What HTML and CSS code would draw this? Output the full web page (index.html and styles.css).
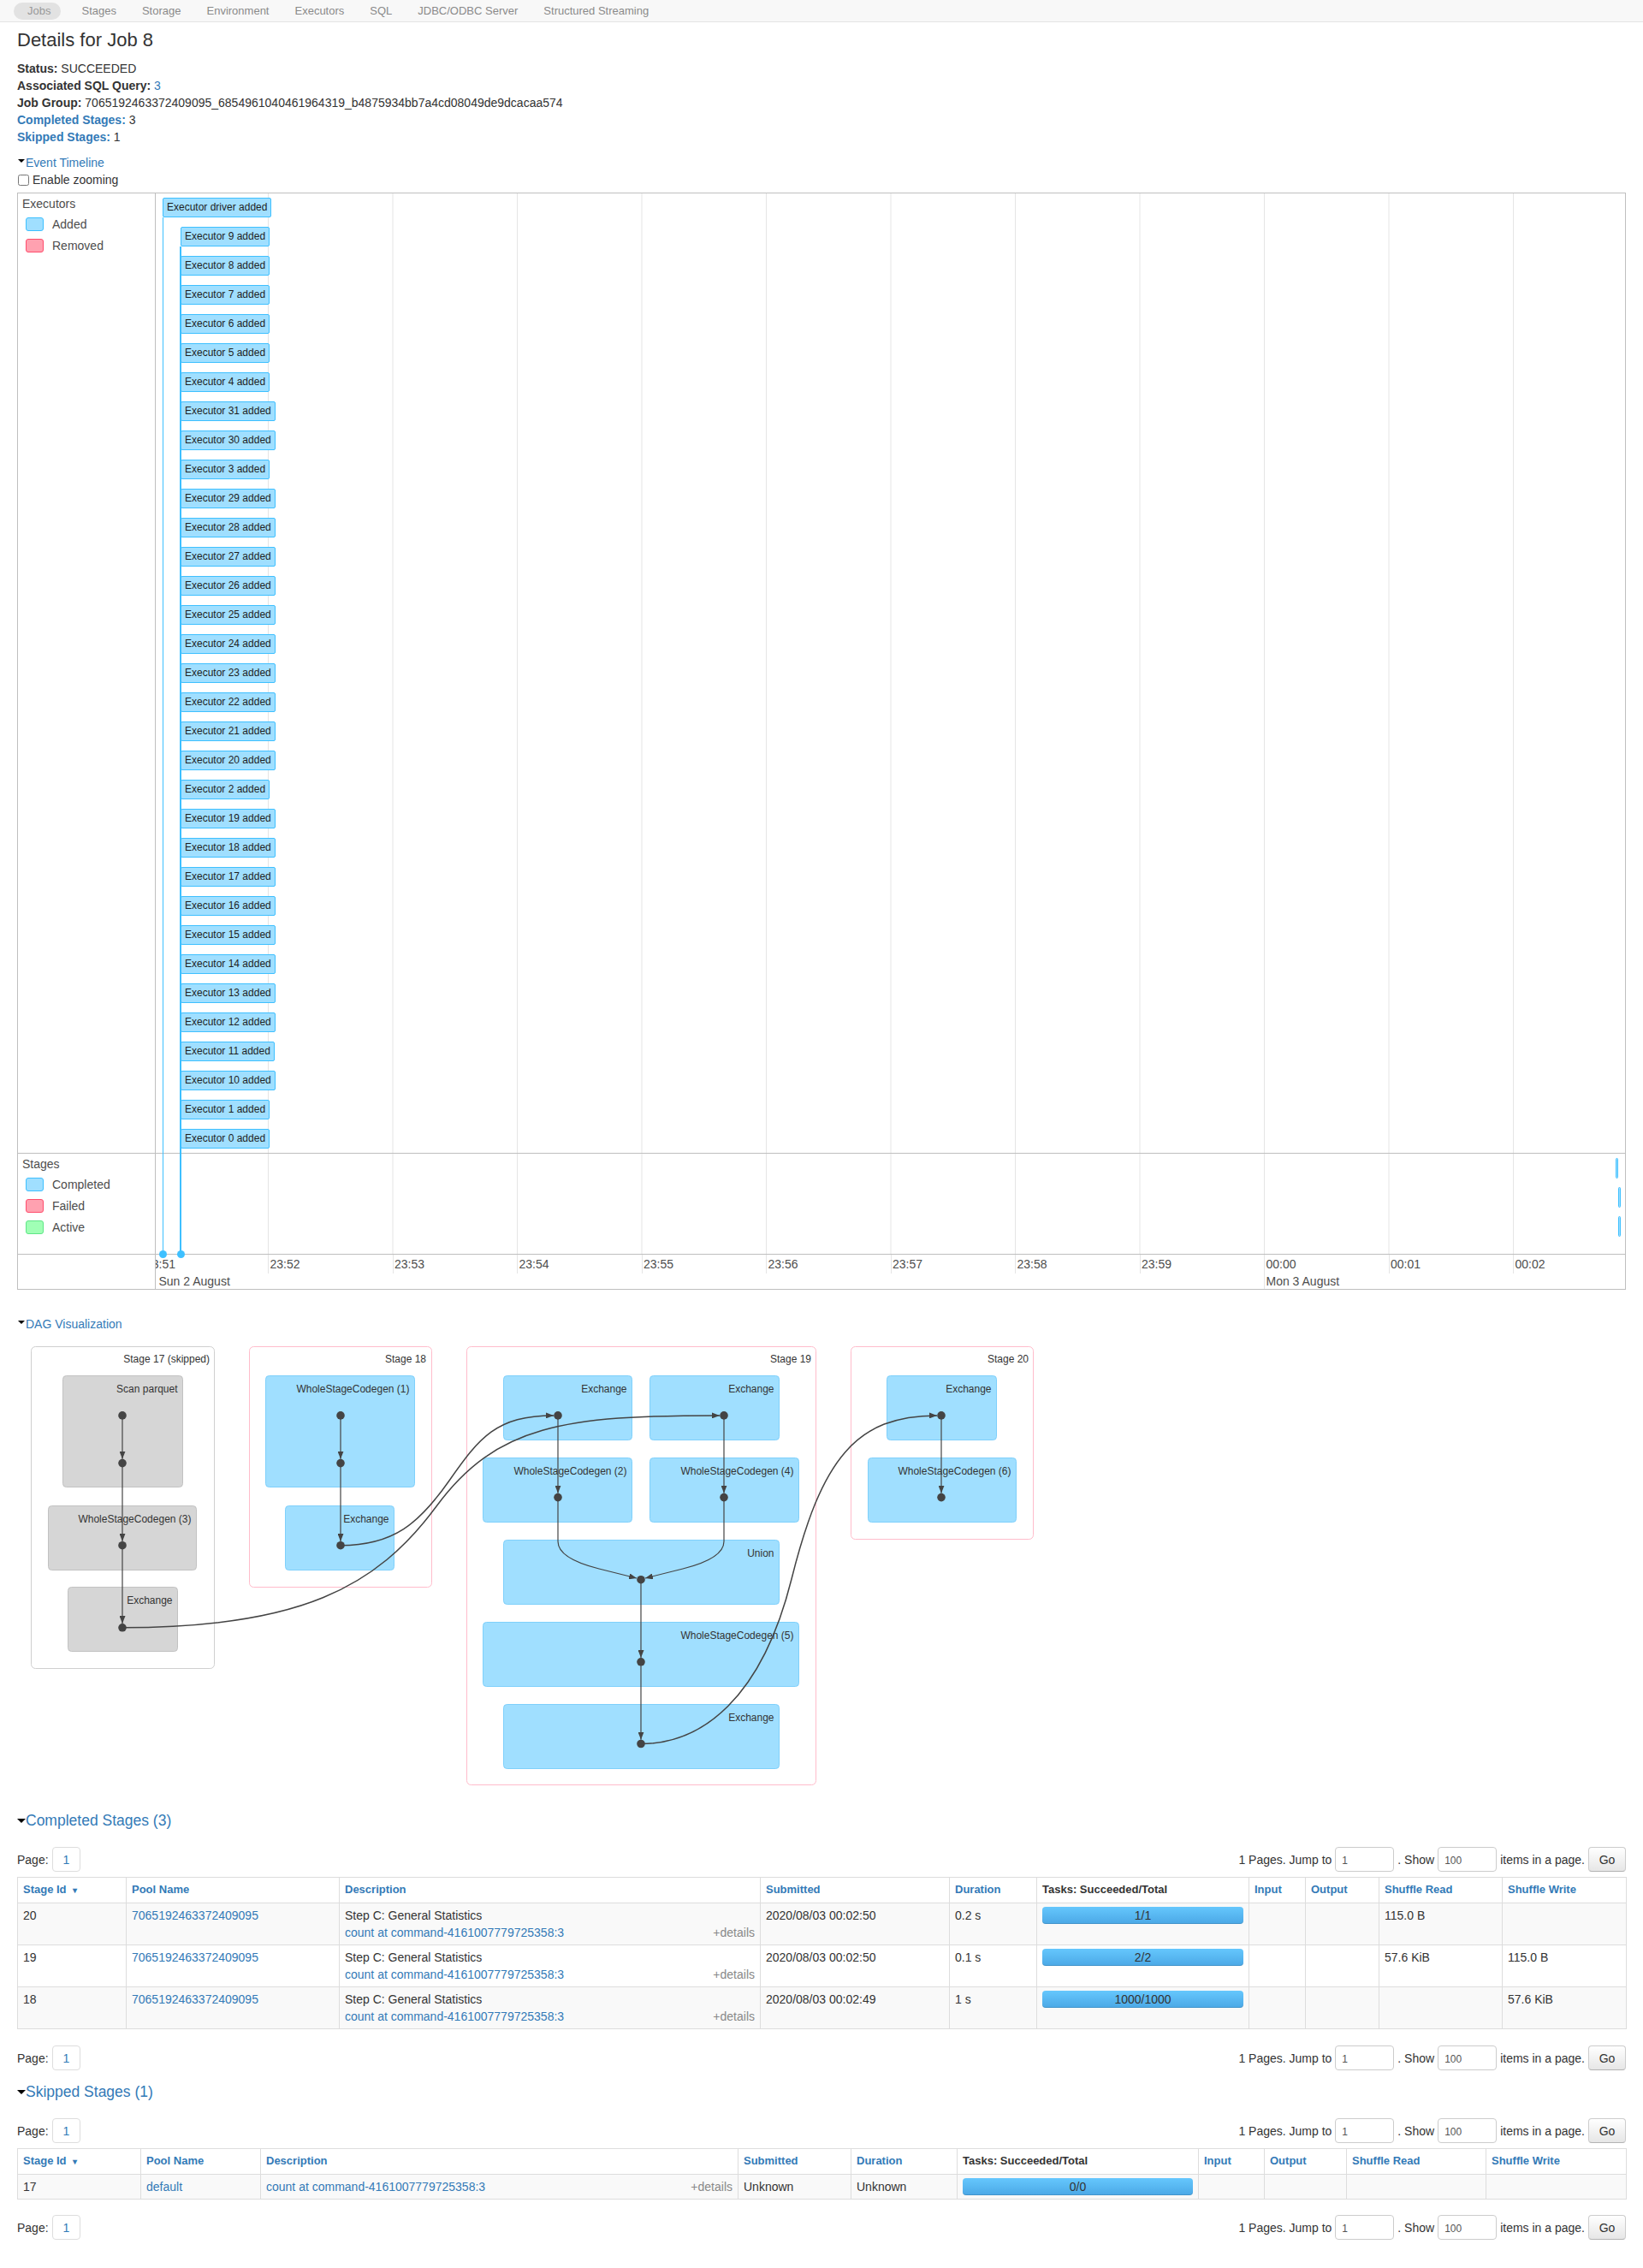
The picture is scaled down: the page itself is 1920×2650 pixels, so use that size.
FILE: index.html
```html
<!DOCTYPE html>
<html lang="en">
<head>
<meta charset="utf-8">
<title>Spark Jobs - Details for Job 8</title>
<link rel="stylesheet" href="styles.css">
</head>
<body>
<div class="nav">
  <span class="nav-item active">Jobs</span>
  <span class="nav-item">Stages</span>
  <span class="nav-item">Storage</span>
  <span class="nav-item">Environment</span>
  <span class="nav-item">Executors</span>
  <span class="nav-item">SQL</span>
  <span class="nav-item">JDBC/ODBC Server</span>
  <span class="nav-item">Structured Streaming</span>
</div>

<div class="container">
  <h3 class="title">Details for Job 8</h3>
  <ul class="details">
    <li><strong>Status:</strong> SUCCEEDED</li>
    <li><strong>Associated SQL Query:</strong> <a href="#">3</a></li>
    <li><strong>Job Group:</strong> 7065192463372409095_6854961040461964319_b4875934bb7a4cd08049de9dcacaa574</li>
    <li><a class="strong" href="#">Completed Stages:</a> 3</li>
    <li><a class="strong" href="#">Skipped Stages:</a> 1</li>
  </ul>

  <div class="toggle small"><span class="arrow sm"></span><a href="#">Event Timeline</a></div>
  <label class="zoom"><input type="checkbox"><span>Enable zooming</span></label>

  <div class="tl">
    <div class="tl-label">
      <div class="grp-title">Executors</div>
      <div class="legend">
        <div class="lg-row"><span class="lg-box blue"></span>Added</div>
        <div class="lg-row"><span class="lg-box red"></span>Removed</div>
      </div>
    </div>
    <div class="tl-content exec">
      <div class="ex drv">Executor driver added</div>
      <div class="ex">Executor 9 added</div>
      <div class="ex">Executor 8 added</div>
      <div class="ex">Executor 7 added</div>
      <div class="ex">Executor 6 added</div>
      <div class="ex">Executor 5 added</div>
      <div class="ex">Executor 4 added</div>
      <div class="ex">Executor 31 added</div>
      <div class="ex">Executor 30 added</div>
      <div class="ex">Executor 3 added</div>
      <div class="ex">Executor 29 added</div>
      <div class="ex">Executor 28 added</div>
      <div class="ex">Executor 27 added</div>
      <div class="ex">Executor 26 added</div>
      <div class="ex">Executor 25 added</div>
      <div class="ex">Executor 24 added</div>
      <div class="ex">Executor 23 added</div>
      <div class="ex">Executor 22 added</div>
      <div class="ex">Executor 21 added</div>
      <div class="ex">Executor 20 added</div>
      <div class="ex">Executor 2 added</div>
      <div class="ex">Executor 19 added</div>
      <div class="ex">Executor 18 added</div>
      <div class="ex">Executor 17 added</div>
      <div class="ex">Executor 16 added</div>
      <div class="ex">Executor 15 added</div>
      <div class="ex">Executor 14 added</div>
      <div class="ex">Executor 13 added</div>
      <div class="ex">Executor 12 added</div>
      <div class="ex">Executor 11 added</div>
      <div class="ex">Executor 10 added</div>
      <div class="ex">Executor 1 added</div>
      <div class="ex">Executor 0 added</div>
    </div>

    <div class="tl-label">
      <div class="grp-title">Stages</div>
      <div class="legend">
        <div class="lg-row"><span class="lg-box blue"></span>Completed</div>
        <div class="lg-row"><span class="lg-box red"></span>Failed</div>
        <div class="lg-row"><span class="lg-box green"></span>Active</div>
      </div>
    </div>
    <div class="tl-content stg">
      <div class="sbar first"></div>
      <div class="sbar"></div>
      <div class="sbar"></div>
    </div>

    <div class="tl-label last"></div>
    <div class="tl-axis">
      <div class="minor">
        <span class="tick">23:51</span>
        <span class="tick">23:52</span>
        <span class="tick">23:53</span>
        <span class="tick">23:54</span>
        <span class="tick">23:55</span>
        <span class="tick">23:56</span>
        <span class="tick">23:57</span>
        <span class="tick">23:58</span>
        <span class="tick">23:59</span>
        <span class="tick">00:00</span>
        <span class="tick">00:01</span>
        <span class="tick">00:02</span>
      </div>
      <div class="major">
        <span class="day d1">Sun 2 August</span>
        <span class="day d2">Mon 3 August</span>
      </div>
    </div>

    <div class="tl-overlay">
      <span class="vline drv-line"></span>
      <span class="vline ex-line"></span>
      <span class="dot drv-dot"></span>
      <span class="dot ex-dot"></span>
    </div>
  </div>

  <div class="toggle dagh"><span class="arrow sm"></span><a href="#">DAG Visualization</a></div>

  <svg class="dag" width="1880" height="525" viewBox="0 0 1880 525" xmlns="http://www.w3.org/2000/svg">
    <defs>
      <marker id="ah" viewBox="0 0 9 7" refX="9" refY="3.5" markerWidth="9" markerHeight="7" markerUnits="userSpaceOnUse" orient="auto">
        <path d="M0,0 L9,3.5 L0,7 z" fill="#444"/>
      </marker>
    </defs>

    <!-- Stage 17 -->
    <rect class="cl-stage skipped" x="16.5" y="8.5" width="214" height="376" rx="5"/>
    <text class="lbl" x="225" y="27">Stage 17 (skipped)</text>
    <rect class="nd skip" x="53.5" y="42.5" width="140" height="130" rx="4"/>
    <text class="lbl" x="187.5" y="61.5">Scan parquet</text>
    <rect class="nd skip" x="36.5" y="194.5" width="173" height="75" rx="4"/>
    <text class="lbl" x="203.5" y="213.5">WholeStageCodegen (3)</text>
    <rect class="nd skip" x="59.5" y="289.5" width="128" height="75" rx="4"/>
    <text class="lbl" x="181.5" y="308.5">Exchange</text>

    <!-- Stage 18 -->
    <rect class="cl-stage" x="271.5" y="8.5" width="213" height="281" rx="5"/>
    <text class="lbl" x="478" y="27">Stage 18</text>
    <rect class="nd" x="290.5" y="42.5" width="174" height="130" rx="4"/>
    <text class="lbl" x="458.5" y="61.5">WholeStageCodegen (1)</text>
    <rect class="nd" x="313.5" y="194.5" width="127" height="75" rx="4"/>
    <text class="lbl" x="434.5" y="213.5">Exchange</text>

    <!-- Stage 19 -->
    <rect class="cl-stage" x="525.5" y="8.5" width="408" height="512" rx="5"/>
    <text class="lbl" x="928" y="27">Stage 19</text>
    <rect class="nd" x="568.5" y="42.5" width="150" height="75" rx="4"/>
    <text class="lbl" x="712.5" y="61.5">Exchange</text>
    <rect class="nd" x="739.5" y="42.5" width="151" height="75" rx="4"/>
    <text class="lbl" x="884.5" y="61.5">Exchange</text>
    <rect class="nd" x="544.5" y="138.5" width="174" height="75" rx="4"/>
    <text class="lbl" x="712.5" y="157.5">WholeStageCodegen (2)</text>
    <rect class="nd" x="739.5" y="138.5" width="174" height="75" rx="4"/>
    <text class="lbl" x="907.5" y="157.5">WholeStageCodegen (4)</text>
    <rect class="nd" x="568.5" y="234.5" width="322" height="75" rx="4"/>
    <text class="lbl" x="884.5" y="253.5">Union</text>
    <rect class="nd" x="544.5" y="330.5" width="369" height="75" rx="4"/>
    <text class="lbl" x="907.5" y="349.5">WholeStageCodegen (5)</text>
    <rect class="nd" x="568.5" y="426.5" width="322" height="75" rx="4"/>
    <text class="lbl" x="884.5" y="445.5">Exchange</text>

    <!-- Stage 20 -->
    <rect class="cl-stage" x="974.5" y="8.5" width="213" height="225" rx="5"/>
    <text class="lbl" x="1182" y="27">Stage 20</text>
    <rect class="nd" x="1016.5" y="42.5" width="128" height="75" rx="4"/>
    <text class="lbl" x="1138.5" y="61.5">Exchange</text>
    <rect class="nd" x="994.5" y="138.5" width="173" height="75" rx="4"/>
    <text class="lbl" x="1161.5" y="157.5">WholeStageCodegen (6)</text>

    <!-- intra-stage edges -->
    <path class="ed" d="M123,88.9 V139.8" marker-end="url(#ah)"/>
    <path class="ed" d="M123,144.6 V235.9" marker-end="url(#ah)"/>
    <path class="ed" d="M123,240.7 V332" marker-end="url(#ah)"/>
    <path class="ed" d="M378,88.9 V139.8" marker-end="url(#ah)"/>
    <path class="ed" d="M378,144.6 V235.9" marker-end="url(#ah)"/>
    <path class="ed" d="M632,88.9 V179.8" marker-end="url(#ah)"/>
    <path class="ed" d="M826,88.9 V179.8" marker-end="url(#ah)"/>
    <path class="ed" d="M632,184.6 V236 Q632,256 680,268 L724,279" marker-end="url(#ah)"/>
    <path class="ed" d="M826,184.6 V236 Q826,256 778,268 L734,279" marker-end="url(#ah)"/>
    <path class="ed" d="M729,280.7 V372" marker-end="url(#ah)"/>
    <path class="ed" d="M729,376.8 V467.7" marker-end="url(#ah)"/>
    <path class="ed" d="M1080,88.9 V179.8" marker-end="url(#ah)"/>

    <!-- cross-stage edges -->
    <path class="ed x" d="M123,336.8 C330,336.8 420,290 490,195 S640,88.9 821,88.9" marker-end="url(#ah)"/>
    <path class="ed x" d="M378,240.7 C440,240.7 470,215 505,165 S560,88.9 627,88.9" marker-end="url(#ah)"/>
    <path class="ed x" d="M729,472.5 C800,472.5 870,420 905,280 S980,88.9 1075,88.9" marker-end="url(#ah)"/>

    <!-- dots -->
    <circle class="dt" cx="123" cy="88.9" r="4.8"/>
    <circle class="dt" cx="123" cy="144.6" r="4.8"/>
    <circle class="dt" cx="123" cy="240.7" r="4.8"/>
    <circle class="dt" cx="123" cy="336.8" r="4.8"/>
    <circle class="dt" cx="378" cy="88.9" r="4.8"/>
    <circle class="dt" cx="378" cy="144.6" r="4.8"/>
    <circle class="dt" cx="378" cy="240.7" r="4.8"/>
    <circle class="dt" cx="632" cy="88.9" r="4.8"/>
    <circle class="dt" cx="826" cy="88.9" r="4.8"/>
    <circle class="dt" cx="632" cy="184.6" r="4.8"/>
    <circle class="dt" cx="826" cy="184.6" r="4.8"/>
    <circle class="dt" cx="729" cy="280.7" r="4.8"/>
    <circle class="dt" cx="729" cy="376.8" r="4.8"/>
    <circle class="dt" cx="729" cy="472.5" r="4.8"/>
    <circle class="dt" cx="1080" cy="88.9" r="4.8"/>
    <circle class="dt" cx="1080" cy="184.6" r="4.8"/>
  </svg>

  <h4 class="sec"><span class="arrow"></span><a href="#">Completed Stages (3)</a></h4>

  <div class="pager">
    <div class="pg-left">Page: <span class="pg-btn">1</span></div>
    <div class="pg-right">
      <span>1 Pages. Jump to</span>
      <input class="pg-input" type="text" value="1">
      <span>. Show</span>
      <input class="pg-input" type="text" value="100">
      <span>items in a page.</span>
      <button class="go">Go</button>
    </div>
  </div>

  <table class="tbl t-completed">
    <colgroup><col><col><col><col><col><col><col><col><col><col></colgroup>
    <thead>
      <tr>
        <th><a href="#">Stage Id <span class="sort">&#9662;</span></a></th>
        <th><a href="#">Pool Name</a></th>
        <th><a href="#">Description</a></th>
        <th><a href="#">Submitted</a></th>
        <th><a href="#">Duration</a></th>
        <th>Tasks: Succeeded/Total</th>
        <th><a href="#">Input</a></th>
        <th><a href="#">Output</a></th>
        <th><a href="#">Shuffle Read</a></th>
        <th><a href="#">Shuffle Write</a></th>
      </tr>
    </thead>
    <tbody>
      <tr>
        <td>20</td>
        <td><a href="#">7065192463372409095</a></td>
        <td>Step C: General Statistics<div class="desc2"><a href="#">count at command-4161007779725358:3</a><span class="more">+details</span></div></td>
        <td>2020/08/03 00:02:50</td>
        <td>0.2 s</td>
        <td><div class="progress">1/1</div></td>
        <td></td>
        <td></td>
        <td>115.0 B</td>
        <td></td>
      </tr>
      <tr>
        <td>19</td>
        <td><a href="#">7065192463372409095</a></td>
        <td>Step C: General Statistics<div class="desc2"><a href="#">count at command-4161007779725358:3</a><span class="more">+details</span></div></td>
        <td>2020/08/03 00:02:50</td>
        <td>0.1 s</td>
        <td><div class="progress">2/2</div></td>
        <td></td>
        <td></td>
        <td>57.6 KiB</td>
        <td>115.0 B</td>
      </tr>
      <tr>
        <td>18</td>
        <td><a href="#">7065192463372409095</a></td>
        <td>Step C: General Statistics<div class="desc2"><a href="#">count at command-4161007779725358:3</a><span class="more">+details</span></div></td>
        <td>2020/08/03 00:02:49</td>
        <td>1 s</td>
        <td><div class="progress">1000/1000</div></td>
        <td></td>
        <td></td>
        <td></td>
        <td>57.6 KiB</td>
      </tr>
    </tbody>
  </table>

  <div class="pager after">
    <div class="pg-left">Page: <span class="pg-btn">1</span></div>
    <div class="pg-right">
      <span>1 Pages. Jump to</span>
      <input class="pg-input" type="text" value="1">
      <span>. Show</span>
      <input class="pg-input" type="text" value="100">
      <span>items in a page.</span>
      <button class="go">Go</button>
    </div>
  </div>

  <h4 class="sec sec2"><span class="arrow"></span><a href="#">Skipped Stages (1)</a></h4>

  <div class="pager">
    <div class="pg-left">Page: <span class="pg-btn">1</span></div>
    <div class="pg-right">
      <span>1 Pages. Jump to</span>
      <input class="pg-input" type="text" value="1">
      <span>. Show</span>
      <input class="pg-input" type="text" value="100">
      <span>items in a page.</span>
      <button class="go">Go</button>
    </div>
  </div>

  <table class="tbl t-skipped">
    <colgroup><col><col><col><col><col><col><col><col><col><col></colgroup>
    <thead>
      <tr>
        <th><a href="#">Stage Id <span class="sort">&#9662;</span></a></th>
        <th><a href="#">Pool Name</a></th>
        <th><a href="#">Description</a></th>
        <th><a href="#">Submitted</a></th>
        <th><a href="#">Duration</a></th>
        <th>Tasks: Succeeded/Total</th>
        <th><a href="#">Input</a></th>
        <th><a href="#">Output</a></th>
        <th><a href="#">Shuffle Read</a></th>
        <th><a href="#">Shuffle Write</a></th>
      </tr>
    </thead>
    <tbody>
      <tr>
        <td>17</td>
        <td><a href="#">default</a></td>
        <td><div class="desc2"><a href="#">count at command-4161007779725358:3</a><span class="more">+details</span></div></td>
        <td>Unknown</td>
        <td>Unknown</td>
        <td><div class="progress">0/0</div></td>
        <td></td>
        <td></td>
        <td></td>
        <td></td>
      </tr>
    </tbody>
  </table>

  <div class="pager after last-pager">
    <div class="pg-left">Page: <span class="pg-btn">1</span></div>
    <div class="pg-right">
      <span>1 Pages. Jump to</span>
      <input class="pg-input" type="text" value="1">
      <span>. Show</span>
      <input class="pg-input" type="text" value="100">
      <span>items in a page.</span>
      <button class="go">Go</button>
    </div>
  </div>
</div>
</body>
</html>
```

FILE: styles.css
```css
* { box-sizing: border-box; }

body {
  margin: 0;
  font-family: "Liberation Sans", Arial, Helvetica, sans-serif;
  font-size: 14px;
  line-height: 20px;
  color: #333;
  background: #fff;
}

a { color: #337ab7; text-decoration: none; }

/* ---------- top nav ---------- */
.nav {
  height: 26px;
  background: #f8f8f8;
  border-bottom: 1px solid #e3e3e3;
  display: flex;
  align-items: center;
  padding-left: 16px;
  font-size: 13px;
  color: #8a8a8a;
}
.nav-item { padding: 0 15px; line-height: 20px; white-space: nowrap; }
.nav-item.active {
  background: #e2e2e2;
  border-radius: 10px;
  padding: 0 12px 0 16px;
  margin-right: 9px;
  color: #999;
}

/* ---------- header ---------- */
.container { padding: 0 20px; }

.title {
  font-size: 22px;
  line-height: 26px;
  font-weight: normal;
  margin: 8px 0 10px;
  color: #333;
}

.details { list-style: none; margin: 0; padding: 0; }
.details strong, .details .strong { font-weight: bold; }

.toggle { line-height: 20px; margin-top: 10px; }
.arrow {
  display: inline-block;
  width: 0; height: 0;
  border-left: 5px solid transparent;
  border-right: 5px solid transparent;
  border-top: 5px solid #000;
  vertical-align: 4px;
}
.arrow.sm {
  border-left-width: 4px;
  border-right-width: 4px;
  border-top-width: 4px;
  margin-left: 1px;
  margin-right: 1px;
  vertical-align: 5px;
}

.zoom { display: flex; align-items: center; gap: 4px; height: 20px; }
.zoom input { margin: 0 0 0 1px; width: 13px; height: 13px; }

/* ---------- timeline ---------- */
.tl {
  position: relative;
  margin-top: 5px;
  display: grid;
  grid-template-columns: 161px 1fr;
  grid-template-rows: 1122px 118px 40px;
  border: 1px solid #bfbfbf;
  color: #4d4d4d;
}
.tl-label {
  border-right: 1px solid #bfbfbf;
  border-bottom: 1px solid #bfbfbf;
  padding: 2px 0 0 5px;
}
.tl-label.last { border-bottom: 0; }
.grp-title { line-height: 20px; }
.legend { margin-top: 1px; padding-left: 4px; }
.lg-row { display: flex; align-items: center; height: 25px; gap: 10px; color: #4d4d4d; }
.lg-box { width: 21px; height: 16px; border: 1px solid; border-radius: 3px; }
.lg-box.blue { background: #a0dfff; border-color: #3ec0ff; }
.lg-box.red { background: #ffa1b0; border-color: #ff4d6d; }
.lg-box.green { background: #a0ffb5; border-color: #5fe687; }

.tl-content {
  position: relative;
  overflow: hidden;
  border-bottom: 1px solid #bfbfbf;
  background-image: linear-gradient(90deg, #e5e5e5 1px, transparent 1px);
  background-size: 145.5px 100%;
  background-position: 131px 0;
  background-repeat: repeat-x;
}
.tl-content.exec {
  display: flex;
  flex-direction: column;
  align-items: flex-start;
  gap: 11px;
  padding-top: 5px;
}
.ex {
  position: relative;
  z-index: 2;
  height: 23px;
  margin-left: 29px;
  padding: 0 4px;
  line-height: 21px;
  font-size: 12px;
  color: #1e1e1e;
  background: #a0dfff;
  border: 1px solid #3ec0ff;
  border-radius: 2px;
  white-space: nowrap;
}
.ex.drv { margin-left: 8px; }

.tl-content.stg {
  display: flex;
  flex-direction: column;
  align-items: flex-start;
  gap: 10px;
  padding-top: 5px;
}
.sbar {
  width: 3px;
  height: 24px;
  margin-left: 1709px;
  background: #a0dfff;
  border: 1px solid #3ec0ff;
  border-radius: 2px;
}
.sbar.first { margin-left: 1706px; }

.tl-axis { position: relative; overflow: hidden; font-size: 14px; color: #4d4d4d; }
.minor { display: flex; margin-left: -14.5px; height: 22px; }
.tick {
  flex: 0 0 145.5px;
  border-left: 1px solid #e5e5e5;
  padding: 1px 0 0 1.5px;
  line-height: 20px;
  white-space: nowrap;
}
.major { display: flex; height: 18px; line-height: 18px; }
.day { white-space: nowrap; }
.day.d1 { flex: 0 0 1294.5px; padding-left: 3.5px; }
.day.d2 { border-left: 1px solid #e5e5e5; padding-left: 2px; }

.tl-overlay { position: absolute; left: 0; top: 0; width: 0; height: 0; z-index: 1; }
.vline { position: absolute; background: #3ec0ff; }
.drv-line { left: 169px; top: 28px; width: 1px; height: 1211px; }
.ex-line { left: 189px; top: 62px; width: 2px; height: 1177px; }
.dot { position: absolute; width: 9px; height: 9px; border-radius: 50%; background: #3ec0ff; top: 1235px; }
.drv-dot { left: 165px; }
.ex-dot { left: 186px; }

/* ---------- DAG ---------- */
.dagh { margin-top: 30px; }
.dag { display: block; margin-top: 8px; font-family: "Liberation Sans", Arial, sans-serif; }
.cl-stage { fill: #fff; stroke: #ffbccb; stroke-width: 1; }
.cl-stage.skipped { stroke: #cfcfcf; }
.nd { fill: #a0dfff; stroke: #7fd0fb; stroke-width: 1; }
.nd.skip { fill: #d6d6d6; stroke: #c2c2c2; }
.lbl { font-size: 12px; fill: #333; text-anchor: end; }
.ed { fill: none; stroke: #444; stroke-width: 1.2; }
.ed.x { stroke-width: 1.5; }
.dt { fill: #444; }

/* ---------- sections ---------- */
.sec {
  font-size: 17.5px;
  line-height: 20px;
  font-weight: normal;
  margin: 27px 0 0;
}
.sec .arrow { vertical-align: 3px; }
.sec2 { margin-top: 15px; }

.pager {
  display: flex;
  justify-content: space-between;
  align-items: center;
  height: 29px;
  margin-top: 21px;
}
.pager.after { margin-top: 19px; }
.pager.last-pager { margin-top: 18px; }
.pg-left { display: flex; align-items: center; gap: 4px; }
.pg-btn {
  display: inline-flex;
  align-items: center;
  height: 29px;
  padding: 0 12px;
  border: 1px solid #ddd;
  border-radius: 4px;
  color: #337ab7;
}
.pg-right { display: flex; align-items: center; gap: 4px; white-space: nowrap; }
.pg-input {
  width: 69px;
  height: 29px;
  border: 1px solid #ccc;
  border-radius: 4px;
  padding: 2px 7px 0;
  font-family: "Liberation Sans", Arial, sans-serif;
  font-size: 12px;
  color: #555;
  background: #fff;
}
.go {
  width: 44px;
  height: 29px;
  border: 1px solid #ccc;
  border-bottom-color: #b3b3b3;
  border-radius: 4px;
  background: linear-gradient(#ffffff, #e6e6e6);
  font-family: "Liberation Sans", Arial, sans-serif;
  font-size: 14px;
  color: #333;
  padding: 0;
}

/* ---------- tables ---------- */
.tbl {
  width: 100%;
  table-layout: fixed;
  border-collapse: collapse;
  margin-top: 6px;
}
.tbl th, .tbl td {
  border: 1px solid #ddd;
  padding: 4px 6px;
  line-height: 20px;
  vertical-align: top;
  text-align: left;
}
.tbl th { font-size: 13px; font-weight: bold; color: #333; }
.tbl th a { color: #337ab7; }
.tbl tbody tr:nth-child(odd) td { background: #f9f9f9; }
.sort { font-size: 10px; margin-left: 4px; }
.desc2 { display: flex; justify-content: space-between; }
.more { color: #888; }
.progress {
  height: 20px;
  line-height: 20px;
  border-radius: 4px;
  text-align: center;
  color: #333;
  background: linear-gradient(#65c7fd, #4ba8e6);
  box-shadow: inset 0 -1px 0 rgba(0,0,0,0.12);
}

.t-completed col:nth-child(1) { width: 127px; }
.t-completed col:nth-child(2) { width: 249px; }
.t-completed col:nth-child(3) { width: 492px; }
.t-completed col:nth-child(4) { width: 221px; }
.t-completed col:nth-child(5) { width: 102px; }
.t-completed col:nth-child(6) { width: 248px; }
.t-completed col:nth-child(7) { width: 66px; }
.t-completed col:nth-child(8) { width: 86px; }
.t-completed col:nth-child(9) { width: 144px; }
.t-completed col:nth-child(10) { width: 145px; }

.t-skipped col:nth-child(1) { width: 144px; }
.t-skipped col:nth-child(2) { width: 140px; }
.t-skipped col:nth-child(3) { width: 558px; }
.t-skipped col:nth-child(4) { width: 132px; }
.t-skipped col:nth-child(5) { width: 124px; }
.t-skipped col:nth-child(6) { width: 282px; }
.t-skipped col:nth-child(7) { width: 77px; }
.t-skipped col:nth-child(8) { width: 96px; }
.t-skipped col:nth-child(9) { width: 163px; }
.t-skipped col:nth-child(10) { width: 164px; }
```
